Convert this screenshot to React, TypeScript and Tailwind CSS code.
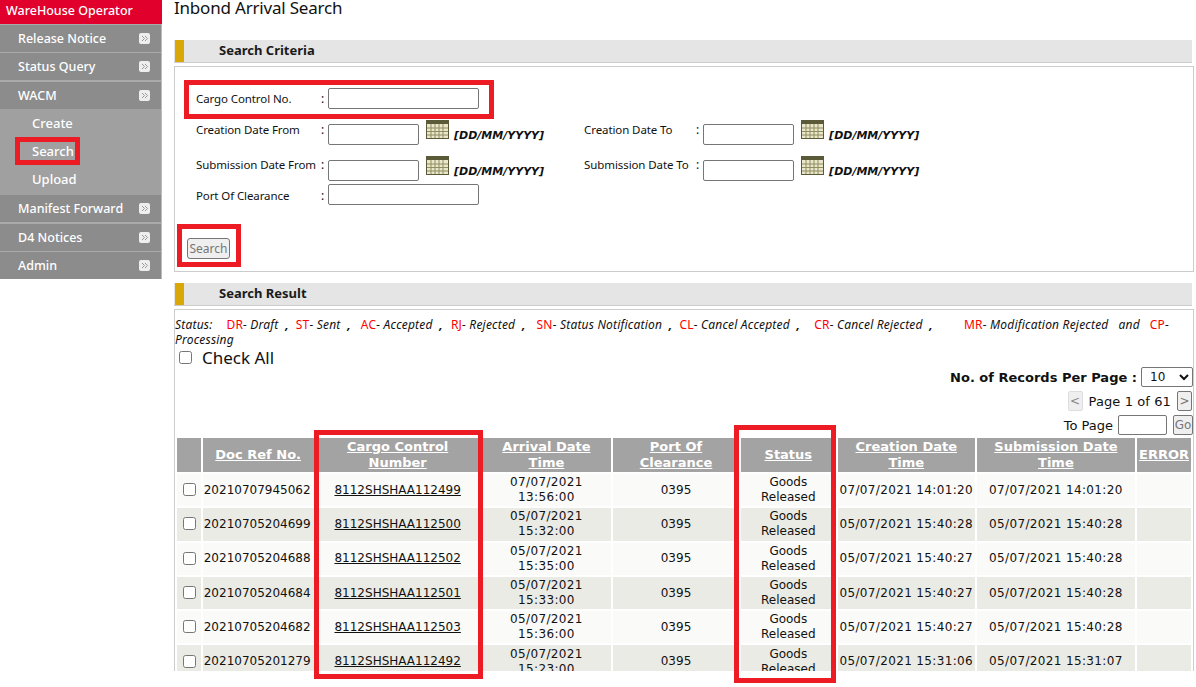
const menu = ["Release Notice", "Status Query", "WACM"];
const menu2 = ["Manifest Forward", "D4 Notices", "Admin"];
const rows = [
  ["20210707945062", "8112SHSHAA112499", "07/07/2021", "13:56:00", "07/07/2021 14:01:20", "07/07/2021 14:01:20"],
  ["20210705204699", "8112SHSHAA112500", "05/07/2021", "15:32:00", "05/07/2021 15:40:28", "05/07/2021 15:40:28"],
  ["20210705204688", "8112SHSHAA112502", "05/07/2021", "15:35:00", "05/07/2021 15:40:27", "05/07/2021 15:40:28"],
  ["20210705204684", "8112SHSHAA112501", "05/07/2021", "15:33:00", "05/07/2021 15:40:27", "05/07/2021 15:40:28"],
  ["20210705204682", "8112SHSHAA112503", "05/07/2021", "15:36:00", "05/07/2021 15:40:27", "05/07/2021 15:40:28"],
  ["20210705201279", "8112SHSHAA112492", "05/07/2021", "15:23:00", "05/07/2021 15:31:06", "05/07/2021 15:31:07"],
];
const statuses = [
  ["DR", "Draft", "ml-[14px]"],
  ["ST", "Sent", "ml-[7px]"],
  ["AC", "Accepted", "ml-[10px]"],
  ["RJ", "Rejected", "ml-[8px]"],
  ["SN", "Status Notification", "ml-[11px]"],
  ["CL", "Cancel Accepted", "ml-[7px]"],
  ["CR", "Cancel Rejected", "ml-[14px]"],
];

function Chevrons() {
  return (
    <svg width="11" height="11" viewBox="0 0 11 11" className="shrink-0">
      <rect width="11" height="11" rx="2" fill="#eeeeee" />
      <path d="M3 3l2.5 2.5L3 8M6 3l2.5 2.5L6 8" fill="none" stroke="#999999" strokeWidth="1" />
    </svg>
  );
}

function MenuItem({ label }: { label: string }) {
  return (
    <div className="flex h-[27px] items-center justify-between bg-[#8c8c8c] pl-[18px] pr-[11px] text-[12.5px] font-medium text-white">
      <span>{label}</span>
      <Chevrons />
    </div>
  );
}

function Calendar() {
  return (
    <svg width="23" height="19" viewBox="0 0 23 19" className="ml-[7px] shrink-0">
      <rect width="23" height="19" fill="#5a5a38" />
      <rect x="1" y="4" width="21" height="14" fill="#e9e6c9" />
      <path d="M1 8h21M1 11.500h21M1 15h21M5 4v14M9 4v14M13 4v14M17 4v14" stroke="#8f8d63" strokeWidth="1" />
    </svg>
  );
}

function Field({ label, labelWidth, small, labelTop }: { label: string; labelWidth: string; small?: boolean; labelTop: string }) {
  return (
    <>
      <span className={`${labelWidth} ${labelTop} shrink-0 whitespace-nowrap text-[11.500px] tracking-[-0.1px]`}>{label}</span>
      <span className={`w-[7px] shrink-0 ${labelTop}`}>:</span>
      <input className={`${small ? "mt-[4px] w-[91px]" : "w-[151px]"} h-[21px] shrink-0 rounded-[2px] border border-[#767676] bg-white`} />
    </>
  );
}

function DateField({ label, labelWidth, labelTop }: { label: string; labelWidth: string; labelTop: string }) {
  return (
    <div className="flex">
      <Field label={label} labelWidth={labelWidth} labelTop={labelTop} small />
      <Calendar />
      <span className="ml-[5px] mt-[8px] font-['DejaVu_Sans',sans-serif] text-[11px] font-bold italic whitespace-nowrap">[DD/MM/YYYY]</span>
    </div>
  );
}

function SectionBar({ title }: { title: string }) {
  return (
    <div className="flex h-[23px] w-[1018px] border-b border-[#cccccc] bg-[#e5e5e5]">
      <div className="ml-[1px] w-[9px] bg-[#d9a806]" />
      <span className="ml-[35px] text-[13px] leading-[21px] font-bold text-[#1a1a1a]">{title}</span>
    </div>
  );
}

function RedBox({ className }: { className: string }) {
  return <div className={`pointer-events-none absolute border-[5px] border-[#ed1c24] ${className}`} />;
}

const th = "bg-[#a3a3a3] px-0 text-center text-[13px] leading-[16px] font-bold text-white underline";
const td = "px-0 text-center";
const dateCell = "px-0 text-center tracking-[0.35px] whitespace-nowrap";

export default function App() {
  return (
    <div className="relative flex h-[687px] w-[1196px] overflow-hidden bg-white font-['Noto_Sans',sans-serif] text-[12px] leading-[15px] text-[#111111]">
      <aside className="w-[162px] shrink-0">
        <div className="h-[24px] bg-[#e0002b] pl-[6px] text-[12.500px] leading-[22px] font-medium text-white">WareHouse Operator</div>
        <div className="border-r border-[#bbbbbb]">
          <div className="flex h-[1px] bg-[#aaaaaa]" />
          <MenuItem label={menu[0]} />
          <div className="h-[1px] bg-[#aaaaaa]" />
          <MenuItem label={menu[1]} />
          <div className="h-[2px] bg-[#aaaaaa]" />
          <MenuItem label={menu[2]} />
          <div className="h-[86px] bg-[#a0a0a0] pl-[32px] text-[13px] leading-[28px] font-medium text-white">
            <div>Create</div>
            <div>Search</div>
            <div>Upload</div>
          </div>
          <MenuItem label={menu2[0]} />
          <div className="h-[2px] bg-[#aaaaaa]" />
          <MenuItem label={menu2[1]} />
          <div className="h-[1px] bg-[#aaaaaa]" />
          <MenuItem label={menu2[2]} />
        </div>
      </aside>

      <main className="ml-[12px] w-[1020px] shrink-0">
        <h1 className="h-[40px] text-[17px] leading-[16px] font-normal tracking-[-0.2px]">Inbond Arrival Search</h1>
        <SectionBar title="Search Criteria" />
        <section className="mt-[3px] h-[206px] border border-[#cccccc] pl-[21px] pt-[21px]">
          <div className="flex h-[32px]">
            <Field label="Cargo Control No." labelWidth="w-[125px]" labelTop="mt-[3px]" />
          </div>
          <div className="flex h-[36px] gap-[40px]">
            <DateField label="Creation Date From" labelWidth="w-[125px]" labelTop="mt-[2px]" />
            <DateField label="Creation Date To" labelWidth="w-[112px]" labelTop="mt-[2px]" />
          </div>
          <div className="flex h-[28px] gap-[40px]">
            <DateField label="Submission Date From" labelWidth="w-[125px]" labelTop="mt-[1px]" />
            <DateField label="Submission Date To" labelWidth="w-[112px]" labelTop="mt-[1px]" />
          </div>
          <div className="flex">
            <Field label="Port Of Clearance" labelWidth="w-[125px]" labelTop="mt-[4px]" />
          </div>
          <button className="-ml-[9px] mt-[33px] block h-[21px] w-[43px] rounded-[3px] border border-[#767676] bg-[#efefef] text-[12px] text-[#777777]">Search</button>
        </section>

        <div className="mt-[11px]">
          <SectionBar title="Search Result" />
        </div>
        <section className="mt-[3px] h-[362px] overflow-hidden border-x border-t border-[#cccccc]">
          <div className="pt-[7px] text-[12px] tracking-[0.2px] italic">
            <div className="flex whitespace-nowrap">
              <span>Status:</span>
              {statuses.map(([code, name, ml]) => (
                <span key={code} className={`${ml} whitespace-pre`}>
                  <span className="not-italic text-[#ff0000]">{code}</span>- {name}  <span className="font-bold">,</span>
                </span>
              ))}
              <span className="ml-[31px] whitespace-pre"><span className="not-italic text-[#ff0000]">MR</span>- Modification Rejected</span>
              <span className="ml-[10px]">and</span>
              <span className="ml-[10px]"><span className="not-italic text-[#ff0000]">CP</span>-</span>
            </div>
            <div>Processing</div>
          </div>
          <label className="flex h-[20px] items-center pl-[4px] text-[17px] not-italic">
            <input type="checkbox" className="h-[13px] w-[13px]" />
            <span className="ml-[10px] font-normal">Check All</span>
          </label>
          <div className="flex h-[20px] items-center justify-end gap-[4px] font-['DejaVu_Sans',sans-serif] text-[13px] font-bold">
            <span>No. of Records Per Page :</span>
            <select className="h-[20px] w-[52px] rounded-[2px] border border-[#767676] bg-white pl-[4px] font-['DejaVu_Sans',sans-serif] text-[12px] font-normal">
              <option>10</option>
            </select>
          </div>
          <div className="mt-[4px] flex h-[20px] items-center justify-end font-['DejaVu_Sans',sans-serif] text-[13px] tracking-[0.1px]">
            <button className="h-[20px] w-[15px] rounded-[2px] border border-[#dddddd] bg-[#efefef] text-[12px] text-[#888888]">&lt;</button>
            <span className="mx-[6px]">Page 1 of 61</span>
            <button className="mr-[1px] h-[20px] w-[15px] rounded-[2px] border border-[#767676] bg-[#efefef] text-[12px] text-[#777777]">&gt;</button>
          </div>
          <div className="mt-[4px] flex h-[20px] items-center justify-end font-['DejaVu_Sans',sans-serif] text-[13px]">
            <span>To Page</span>
            <input className="ml-[5px] h-[20px] w-[49px] rounded-[2px] border border-[#767676] bg-white" />
            <button className="ml-[6px] h-[20px] w-[20px] rounded-[2px] border border-[#767676] bg-[#efefef] text-[12px] text-[#777777]">Go</button>
          </div>

          <table className="mt-[1px] table-fixed border-separate border-spacing-[2px] font-['DejaVu_Sans',sans-serif] text-[12px] leading-[15px]">
            <thead>
              <tr className="h-[34px]">
                <th className={`${th} w-[24px]`} />
                <th className={`${th} w-[111px]`}>Doc Ref No.</th>
                <th className={`${th} w-[165px]`}>Cargo Control<br />Number</th>
                <th className={`${th} w-[131px]`}>Arrival Date<br />Time</th>
                <th className={`${th} w-[127px]`}>Port Of<br />Clearance</th>
                <th className={`${th} w-[96px]`}>Status</th>
                <th className={`${th} w-[137px]`}>Creation Date<br />Time</th>
                <th className={`${th} w-[159px]`}>Submission Date<br />Time</th>
                <th className={`${th} w-[54px]`}>ERROR</th>
              </tr>
            </thead>
            <tbody>
              {rows.map((r, i) => (
                <tr key={r[0]} className={`h-[32.300px] ${i % 2 === 0 ? "bg-[#fafaf8]" : "bg-[#ebebe5]"}`}>
                  <td className="pl-[1px] text-center"><input type="checkbox" className="mt-[3px] h-[13px] w-[13px]" /></td>
                  <td className="pl-[1px] text-left">{r[0]}</td>
                  <td className={`${td} underline`}>{r[1]}</td>
                  <td className={dateCell}>{r[2]}<br />{r[3]}</td>
                  <td className={td}>0395</td>
                  <td className={td}>Goods<br />Released</td>
                  <td className={dateCell}>{r[4]}</td>
                  <td className={dateCell}>{r[5]}</td>
                  <td className={td} />
                </tr>
              ))}
            </tbody>
          </table>
        </section>
      </main>

      <RedBox className="left-[15px] top-[137px] h-[28px] w-[65px]" />
      <RedBox className="left-[184px] top-[80px] h-[39px] w-[310px]" />
      <RedBox className="left-[177px] top-[224px] h-[43px] w-[64px]" />
      <RedBox className="left-[314px] top-[430px] h-[249px] w-[169px]" />
      <RedBox className="left-[734px] top-[425px] h-[258px] w-[102px]" />
    </div>
  );
}
